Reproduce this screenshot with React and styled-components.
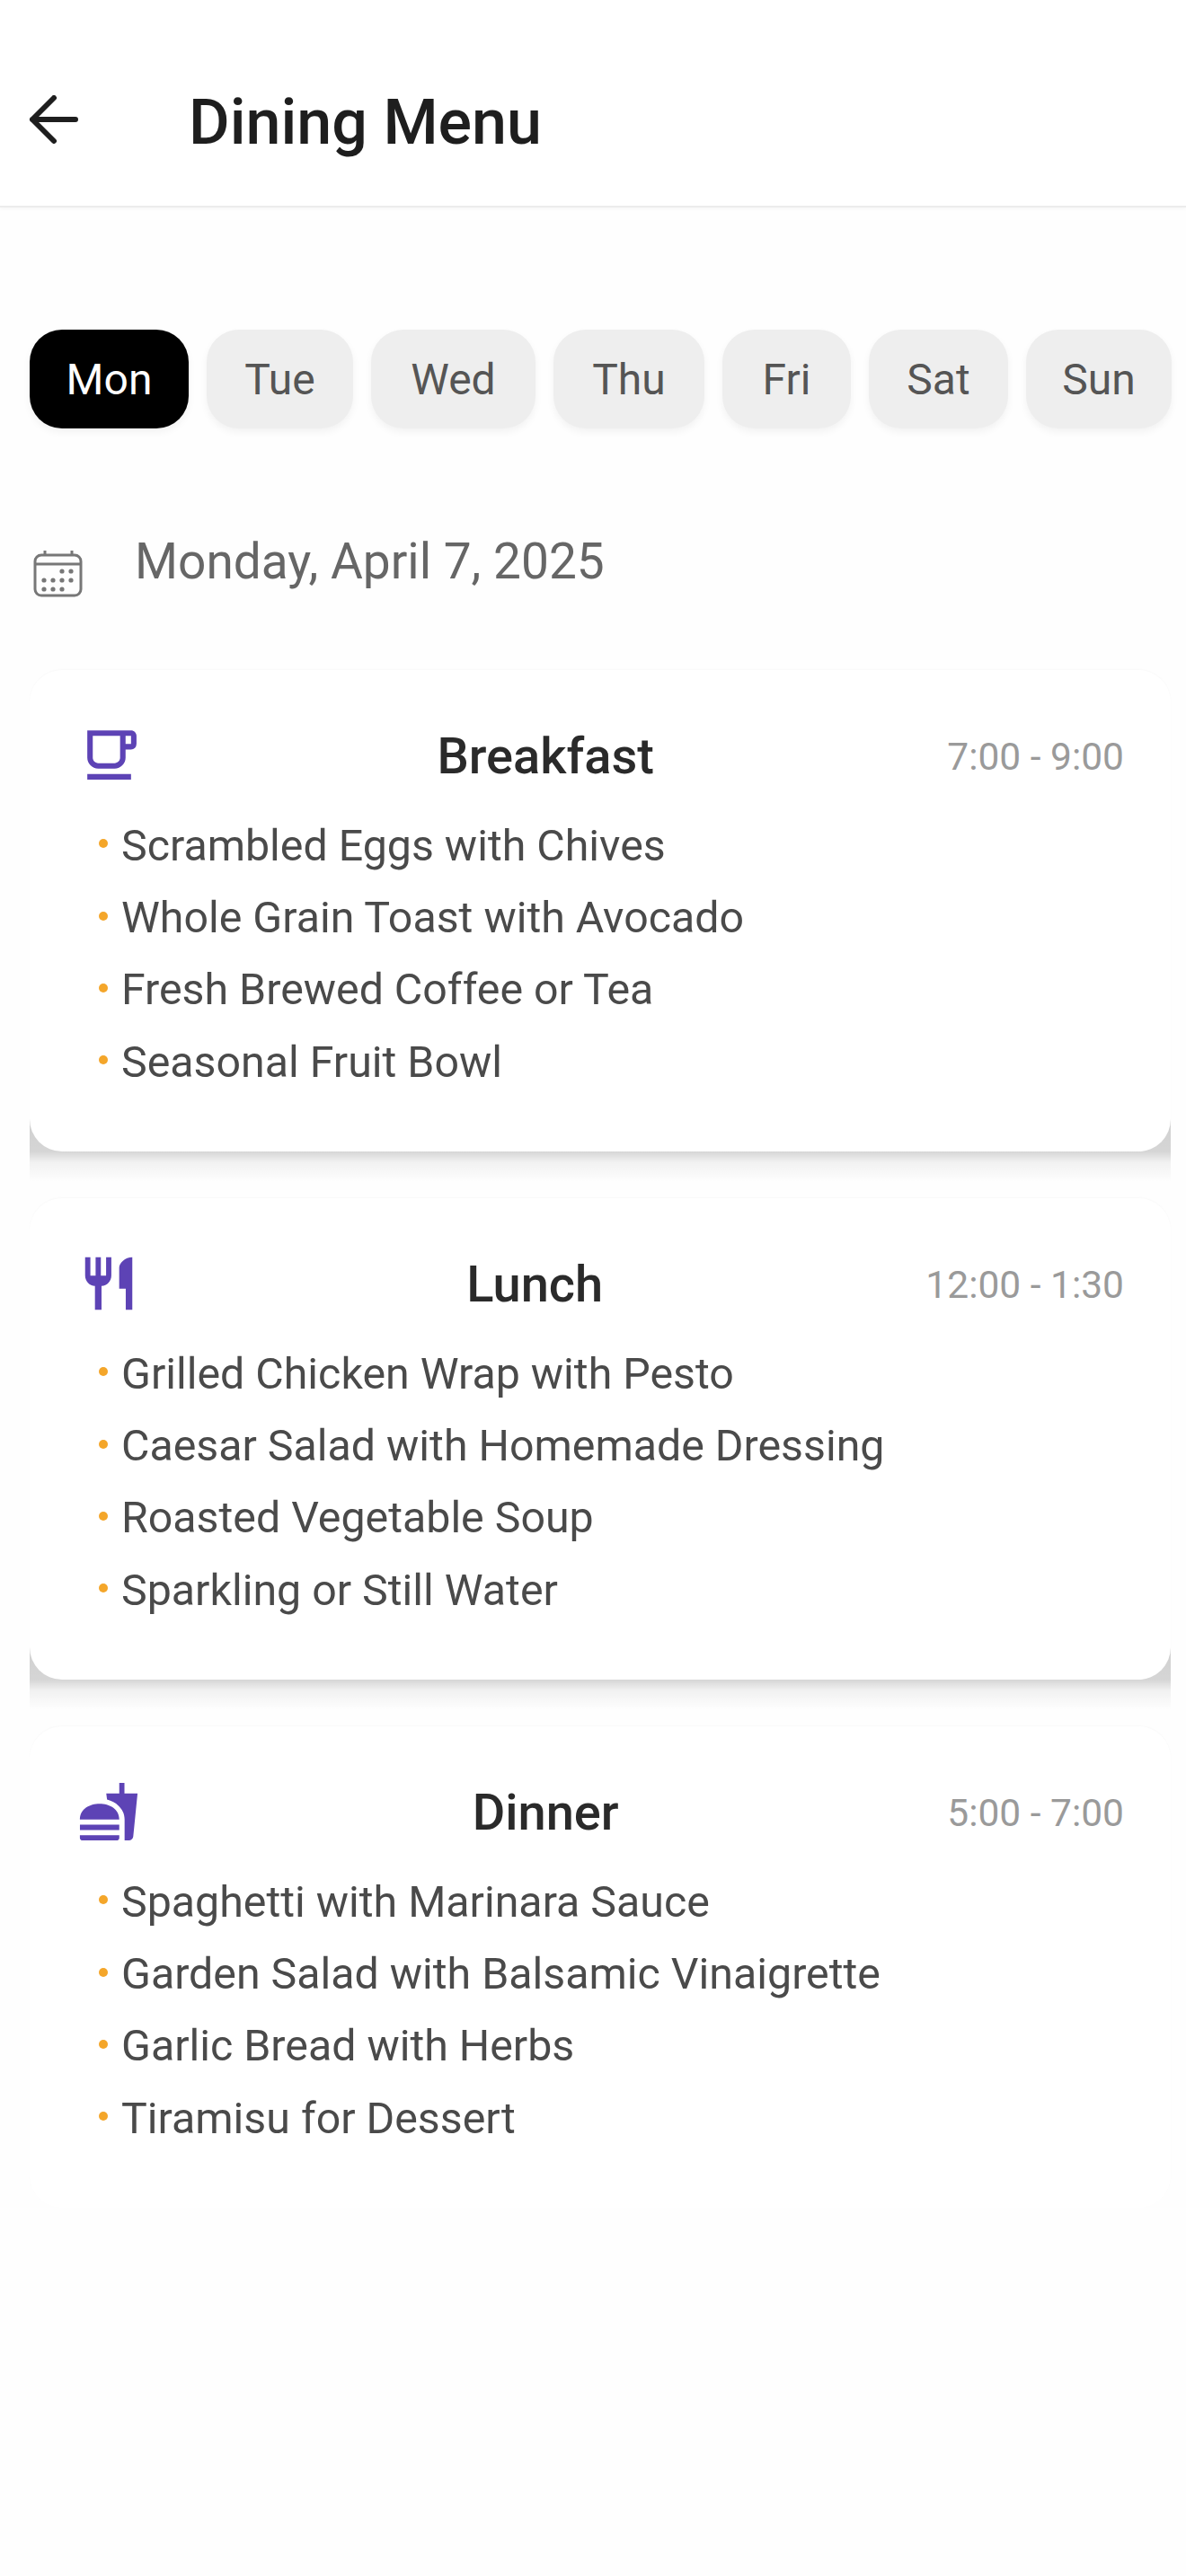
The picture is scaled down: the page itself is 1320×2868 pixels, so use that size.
import React from 'react';
import styled, { createGlobalStyle } from 'styled-components';
import { MdOutlineFreeBreakfast, MdRestaurant, MdFastfood } from 'react-icons/md';

const GlobalStyle = createGlobalStyle`
  html, body {
    margin: 0;
    padding: 0;
    background: #fefefe;
  }
  * {
    box-sizing: border-box;
  }
`;

const Page = styled.div`
  width: 1320px;
  min-height: 2868px;
  overflow: hidden;
  background: #fefefe;
  font-family: Roboto, "Liberation Sans", sans-serif;
`;

const Header = styled.header`
  height: 231px;
  padding: 39px 0 0 32px;
  display: flex;
  align-items: center;
  gap: 122px;
  background: #fff;
  border-bottom: 2px solid #ececec;
  box-shadow: 0 2px 4px rgba(0, 0, 0, 0.03);
`;

const BackIcon = styled.svg`
  width: 56px;
  height: 56px;
  flex: none;
`;

const Title = styled.h1`
  margin: 4px 0 0;
  font-size: 70px;
  line-height: 80px;
  font-weight: 500;
  color: #1e1e1e;
`;

const DayList = styled.nav`
  margin: 136px 0 0 33px;
  display: flex;
  gap: 20px;
`;

const DayPill = styled.div`
  width: ${(p) => p.$width}px;
  height: 110px;
  display: flex;
  align-items: center;
  justify-content: center;
  border-radius: 36px;
  font-size: 48px;
  color: ${(p) => (p.$active ? '#fff' : '#555')};
  background: ${(p) => (p.$active ? '#000' : '#eee')};
  box-shadow: 0 4px 8px rgba(0, 0, 0, 0.05);
`;

const DateRow = styled.div`
  margin: 110px 0 0 37px;
  display: flex;
  align-items: flex-start;
  gap: 58px;
`;

const CalendarIcon = styled.svg`
  width: 55px;
  height: 53px;
  margin-top: 25px;
  flex: none;
`;

const DateText = styled.div`
  margin-top: 5px;
  font-size: 55px;
  line-height: 66px;
  color: #666;
`;

const CardList = styled.div`
  position: relative;
  z-index: 0;
  margin: 81px 17px 0 33px;
  display: flex;
  flex-direction: column;
  gap: 52px;
`;

const Card = styled.section`
  position: relative;
  height: 536px;
  padding: 57px 52px 0 49px;
  border-radius: 36px;
  background: #fff;
  box-shadow: 0 -1px 2px rgba(0, 0, 0, 0.025);

  /* shadow is cut off at the card's sides, so a plain box-shadow won't do */
  &::after {
    content: ${(p) => (p.$flat ? 'none' : "''")};
    position: absolute;
    z-index: -1;
    left: 0;
    right: 0;
    bottom: -34px;
    height: 70px;
    background: linear-gradient(
      rgba(0, 0, 0, 0.18) 0,
      rgba(0, 0, 0, 0.16) 36px,
      rgba(0, 0, 0, 0.05) 48px,
      rgba(0, 0, 0, 0) 70px
    );
  }
`;

const CardHead = styled.div`
  height: 78px;
  display: flex;
  align-items: center;
  justify-content: space-between;
`;

const MealIcon = styled.div`
  width: 78px;
  height: 78px;
  padding-bottom: 3px;
  display: flex;
  align-items: center;
  justify-content: center;
  color: #5d43b5;
`;

const MealName = styled.h2`
  margin: 0;
  font-size: 56px;
  font-weight: 500;
  color: #2a2a2a;
`;

const MealTime = styled.div`
  font-size: 42.5px;
  color: #9a9a9a;
`;

const ItemList = styled.ul`
  margin: 20px 0 0 28px;
  padding: 0;
  list-style: none;
`;

const Item = styled.li`
  height: 80.4px;
  display: flex;
  align-items: center;
  gap: 15px;
  font-size: 48.3px;
  color: #4a4a4a;
`;

const Dot = styled.span`
  width: 10px;
  height: 10px;
  margin-bottom: 4px;
  border-radius: 50%;
  background: #f4a62a;
  flex: none;
`;

const days = [
  { name: 'Mon', width: 177, active: true },
  { name: 'Tue', width: 163 },
  { name: 'Wed', width: 183 },
  { name: 'Thu', width: 168 },
  { name: 'Fri', width: 143 },
  { name: 'Sat', width: 155 },
  { name: 'Sun', width: 162 },
];

const meals = [
  {
    name: 'Breakfast',
    time: '7:00 - 9:00',
    icon: <MdOutlineFreeBreakfast size={73} />,
    items: [
      'Scrambled Eggs with Chives',
      'Whole Grain Toast with Avocado',
      'Fresh Brewed Coffee or Tea',
      'Seasonal Fruit Bowl',
    ],
  },
  {
    name: 'Lunch',
    time: '12:00 - 1:30',
    icon: <MdRestaurant size={70} />,
    items: [
      'Grilled Chicken Wrap with Pesto',
      'Caesar Salad with Homemade Dressing',
      'Roasted Vegetable Soup',
      'Sparkling or Still Water',
    ],
  },
  {
    name: 'Dinner',
    time: '5:00 - 7:00',
    flat: true,
    icon: <MdFastfood size={70} />,
    items: [
      'Spaghetti with Marinara Sauce',
      'Garden Salad with Balsamic Vinaigrette',
      'Garlic Bread with Herbs',
      'Tiramisu for Dessert',
    ],
  },
];

const calendarDots = [
  [32, 24], [42, 24],
  [12, 34], [22, 34], [32, 34], [42, 34],
  [12, 44], [22, 44], [32, 44],
];

export default function App() {
  return (
    <Page>
      <GlobalStyle />
      <Header>
        <BackIcon viewBox="0 0 56 56" fill="none" stroke="#1e1e1e" strokeWidth="6" strokeLinecap="round" strokeLinejoin="round">
          <path d="M52 27H4M28 3 4 27l24 24" />
        </BackIcon>
        <Title>Dining Menu</Title>
      </Header>
      <DayList>
        {days.map((d) => (
          <DayPill key={d.name} $active={d.active} $width={d.width}>{d.name}</DayPill>
        ))}
      </DayList>
      <DateRow>
        <CalendarIcon viewBox="0 0 55 53" fill="none" stroke="#777" strokeWidth="3">
          <rect x="2" y="6" width="51" height="45" rx="7" />
          <path d="M2 16h51M13 1v5M43 1v5" />
          {calendarDots.map(([x, y]) => (
            <circle key={`${x}-${y}`} cx={x} cy={y} r="2.6" fill="#777" stroke="none" />
          ))}
        </CalendarIcon>
        <DateText>Monday, April 7, 2025</DateText>
      </DateRow>
      <CardList>
        {meals.map((m) => (
          <Card key={m.name} $flat={m.flat}>
            <CardHead>
              <MealIcon>{m.icon}</MealIcon>
              <MealName>{m.name}</MealName>
              <MealTime>{m.time}</MealTime>
            </CardHead>
            <ItemList>
              {m.items.map((item) => (
                <Item key={item}>
                  <Dot />
                  {item}
                </Item>
              ))}
            </ItemList>
          </Card>
        ))}
      </CardList>
    </Page>
  );
}
